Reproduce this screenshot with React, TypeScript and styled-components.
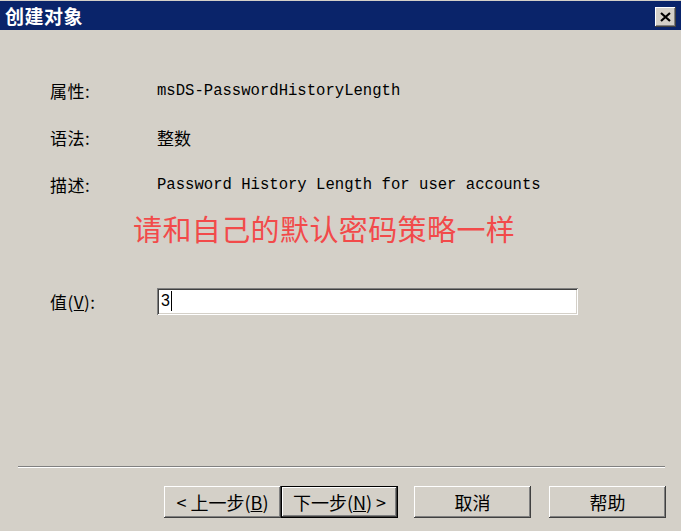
import React from "react";
import styled, { createGlobalStyle, css } from "styled-components";

const Global = createGlobalStyle`
  html, body { margin: 0; padding: 0; background: #d4d0c8; overflow: hidden; }
  * { box-sizing: border-box; }
`;

const cjk = `"Noto Sans CJK SC", "Liberation Sans", sans-serif`;

const Dialog = styled.div`
  width: 681px;
  height: 531px;
  display: flex;
  flex-direction: column;
  background: #d4d0c8;
  font-family: ${cjk};
  color: #000;
`;

const TitleBar = styled.div`
  margin-top: 1px;
  height: 29px;
  background: #0a246a;
  display: flex;
  align-items: center;
  justify-content: space-between;
  padding: 0 5px 0 5px;
`;

const Title = styled.div`
  color: #fff;
  font-weight: 700;
  font-size: 19px;
  line-height: 29px;
  letter-spacing: 0.5px;
`;

const raised = css`
  background: #d4d0c8;
  box-shadow: inset -1px -1px #404040, inset 1px 1px #ffffff,
    inset -2px -2px #808080, inset 2px 2px #d4d0c8;
`;

const CloseButton = styled.div`
  ${raised};
  width: 21px;
  height: 20px;
  margin-top: 3px;
  display: flex;
  align-items: center;
  justify-content: center;
`;

const Content = styled.div`
  flex: 1;
  padding: 37px 0 0 50px;
  display: flex;
  flex-direction: column;
`;

const InfoGrid = styled.div`
  display: grid;
  grid-template-columns: 107px auto;
  grid-auto-rows: 47px;
  align-items: center;
`;

const Label = styled.div`
  font-size: 17px;
  line-height: 20px;
  letter-spacing: 0.5px;
`;

const Value = styled.div<{ $mono?: boolean }>`
  font-size: 17px;
  line-height: 20px;
  ${(p) =>
    p.$mono &&
    css`
      font-family: "Liberation Mono", "DejaVu Sans Mono", monospace;
      font-size: 15.6px;
    `}
`;

const Note = styled.div`
  margin-left: 83px;
  font-size: 29px;
  line-height: 40px;
  color: #f24a4a;
  letter-spacing: 0.4px;
  white-space: nowrap;
`;

const FieldRow = styled.div`
  margin-top: 40px;
  display: grid;
  grid-template-columns: 107px 421px;
  align-items: center;
`;

const TextInput = styled.div`
  height: 27px;
  background: #fff;
  box-shadow: inset 1px 1px #808080, inset -1px -1px #ffffff,
    inset 2px 2px #404040, inset -2px -2px #d4d0c8;
  padding: 3px 0 0 4px;
  display: flex;
  align-items: flex-start;
  font-family: "Liberation Sans", Arial, sans-serif;
  font-size: 16px;
  line-height: 20px;
`;

const Caret = styled.span`
  display: inline-block;
  width: 1px;
  height: 20px;
  background: #000;
  margin-left: 1px;
`;

const Footer = styled.div`
  display: flex;
  flex-direction: column;
`;

const Separator = styled.div`
  margin: 0 16px 0 18px;
  border-top: 1px solid #808080;
  border-bottom: 1px solid #ffffff;
`;

const ButtonRow = styled.div`
  display: flex;
  justify-content: flex-end;
  padding: 18px 15px 13px 0;
`;

const Button = styled.div<{ $default?: boolean; $spaceAfter?: number }>`
  ${raised};
  width: 117px;
  height: 32px;
  margin-right: ${(p) => p.$spaceAfter ?? 0}px;
  display: flex;
  align-items: center;
  justify-content: center;
  font-size: 18px;
  line-height: 20px;
  white-space: pre;
  ${(p) =>
    p.$default &&
    css`
      box-shadow: inset 0 0 0 1px #000, inset -2px -2px #404040,
        inset 2px 2px #ffffff, inset -3px -3px #808080, inset 3px 3px #d4d0c8;
    `}
`;

export default function App() {
  return (
    <Dialog>
      <Global />
      <TitleBar>
        <Title>创建对象</Title>
        <CloseButton>
          <svg width="11" height="10" viewBox="0 0 11 10">
            <path d="M1 1 L10 9 M10 1 L1 9" stroke="#000" strokeWidth="2.2" />
          </svg>
        </CloseButton>
      </TitleBar>
      <Content>
        <InfoGrid>
          <Label>属性:</Label>
          <Value $mono>msDS-PasswordHistoryLength</Value>
          <Label>语法:</Label>
          <Value>整数</Value>
          <Label>描述:</Label>
          <Value $mono>Password History Length for user accounts</Value>
        </InfoGrid>
        <Note>请和自己的默认密码策略一样</Note>
        <FieldRow>
          <Label>
            值(<u>V</u>):
          </Label>
          <TextInput>
            3<Caret />
          </TextInput>
        </FieldRow>
      </Content>
      <Footer>
        <Separator />
        <ButtonRow>
          <Button>
            {"< 上一步("}
            <u>B</u>
            {")"}
          </Button>
          <Button $default $spaceAfter={16}>
            {"下一步("}
            <u>N</u>
            {") >"}
          </Button>
          <Button $spaceAfter={18}>取消</Button>
          <Button>帮助</Button>
        </ButtonRow>
      </Footer>
    </Dialog>
  );
}
